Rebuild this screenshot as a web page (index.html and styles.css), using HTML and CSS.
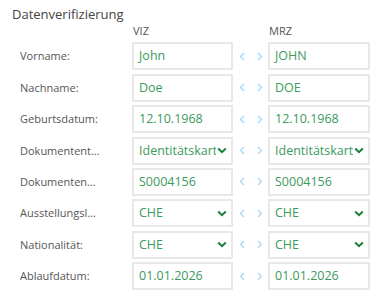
FILE: index.html
```html
<!DOCTYPE html>
<html>
<head>
    <meta charset="UTF-8">
    <link rel="stylesheet" href="styles.css">
</head>
<body>
    <div class="panel">
        <div class="panel-title">Datenverifizierung</div>
        <div class="grid">
            <div></div>
            <div class="col-head">VIZ</div>
            <div></div>
            <div class="col-head">MRZ</div>

            <div class="label">Vorname:</div>
            <div class="field">John</div>
            <div class="arrows"><svg viewBox="0 0 6 9"><path d="M5 1 L1.5 4.5 L5 8"/></svg><svg viewBox="0 0 6 9"><path d="M1 1 L4.5 4.5 L1 8"/></svg></div>
            <div class="field">JOHN</div>

            <div class="label">Nachname:</div>
            <div class="field">Doe</div>
            <div class="arrows"><svg viewBox="0 0 6 9"><path d="M5 1 L1.5 4.5 L5 8"/></svg><svg viewBox="0 0 6 9"><path d="M1 1 L4.5 4.5 L1 8"/></svg></div>
            <div class="field">DOE</div>

            <div class="label">Geburtsdatum:</div>
            <div class="field">12.10.1968</div>
            <div class="arrows"><svg viewBox="0 0 6 9"><path d="M5 1 L1.5 4.5 L5 8"/></svg><svg viewBox="0 0 6 9"><path d="M1 1 L4.5 4.5 L1 8"/></svg></div>
            <div class="field">12.10.1968</div>

            <div class="label">Dokumententyp:</div>
            <div class="field select"><span class="val">Identitätskarte</span><svg class="chev" viewBox="0 0 10 7"><path d="M1.2 1.5 L5 5.2 L8.8 1.5"/></svg></div>
            <div class="arrows"><svg viewBox="0 0 6 9"><path d="M5 1 L1.5 4.5 L5 8"/></svg><svg viewBox="0 0 6 9"><path d="M1 1 L4.5 4.5 L1 8"/></svg></div>
            <div class="field select"><span class="val">Identitätskarte</span><svg class="chev" viewBox="0 0 10 7"><path d="M1.2 1.5 L5 5.2 L8.8 1.5"/></svg></div>

            <div class="label">Dokumentennummer:</div>
            <div class="field">S0004156</div>
            <div class="arrows"><svg viewBox="0 0 6 9"><path d="M5 1 L1.5 4.5 L5 8"/></svg><svg viewBox="0 0 6 9"><path d="M1 1 L4.5 4.5 L1 8"/></svg></div>
            <div class="field">S0004156</div>

            <div class="label">Ausstellungsland:</div>
            <div class="field select"><span class="val">CHE</span><svg class="chev" viewBox="0 0 10 7"><path d="M1.2 1.5 L5 5.2 L8.8 1.5"/></svg></div>
            <div class="arrows"><svg viewBox="0 0 6 9"><path d="M5 1 L1.5 4.5 L5 8"/></svg><svg viewBox="0 0 6 9"><path d="M1 1 L4.5 4.5 L1 8"/></svg></div>
            <div class="field select"><span class="val">CHE</span><svg class="chev" viewBox="0 0 10 7"><path d="M1.2 1.5 L5 5.2 L8.8 1.5"/></svg></div>

            <div class="label">Nationalität:</div>
            <div class="field select"><span class="val">CHE</span><svg class="chev" viewBox="0 0 10 7"><path d="M1.2 1.5 L5 5.2 L8.8 1.5"/></svg></div>
            <div class="arrows"><svg viewBox="0 0 6 9"><path d="M5 1 L1.5 4.5 L5 8"/></svg><svg viewBox="0 0 6 9"><path d="M1 1 L4.5 4.5 L1 8"/></svg></div>
            <div class="field select"><span class="val">CHE</span><svg class="chev" viewBox="0 0 10 7"><path d="M1.2 1.5 L5 5.2 L8.8 1.5"/></svg></div>

            <div class="label">Ablaufdatum:</div>
            <div class="field">01.01.2026</div>
            <div class="arrows"><svg viewBox="0 0 6 9"><path d="M5 1 L1.5 4.5 L5 8"/></svg><svg viewBox="0 0 6 9"><path d="M1 1 L4.5 4.5 L1 8"/></svg></div>
            <div class="field">01.01.2026</div>
        </div>
    </div>
</body>
</html>
```
FILE: styles.css
```css
body {
    margin: 0;
    font-family: "Open Sans", "DejaVu Sans", sans-serif;
    background-color: #ffffff;
    color: #555;
}
.panel {
    padding: 5px 0 0 12px;
}
.panel-title {
    font-size: 13px;
    color: #444;
    height: 18px;
    line-height: 18px;
}
.grid {
    display: grid;
    grid-template-columns: 112px 101px 35px 102px;
    grid-template-rows: 16px;
    grid-auto-rows: 28px;
    row-gap: 3.4px;
    margin-left: 8px;
}
.col-head {
    font-size: 11px;
    color: #555;
    line-height: 16px;
    padding-left: 1px;
}
.label {
    font-size: 11px;
    color: #555;
    line-height: 28px;
    white-space: nowrap;
    overflow: hidden;
    text-overflow: ellipsis;
    max-width: 81px;
}
.field {
    box-sizing: border-box;
    border: 2px solid #e8e8e8;
    font-size: 12.5px;
    color: #3b9a5c;
    line-height: 24px;
    padding-left: 5px;
    white-space: nowrap;
    overflow: hidden;
}
.select {
    display: flex;
    align-items: center;
    padding-right: 4px;
}
.select .val {
    flex: 1;
    overflow: hidden;
    white-space: nowrap;
}
.chev {
    width: 10px;
    height: 7px;
    flex: none;
    fill: none;
    stroke: #16803a;
    stroke-width: 2;
    margin-left: 1px;
}
.arrows {
    display: flex;
    align-items: center;
    justify-content: center;
    gap: 12px;
}
.arrows svg {
    width: 6px;
    height: 9px;
    fill: none;
    stroke: #a3d6f5;
    stroke-width: 1.2;
}
```
